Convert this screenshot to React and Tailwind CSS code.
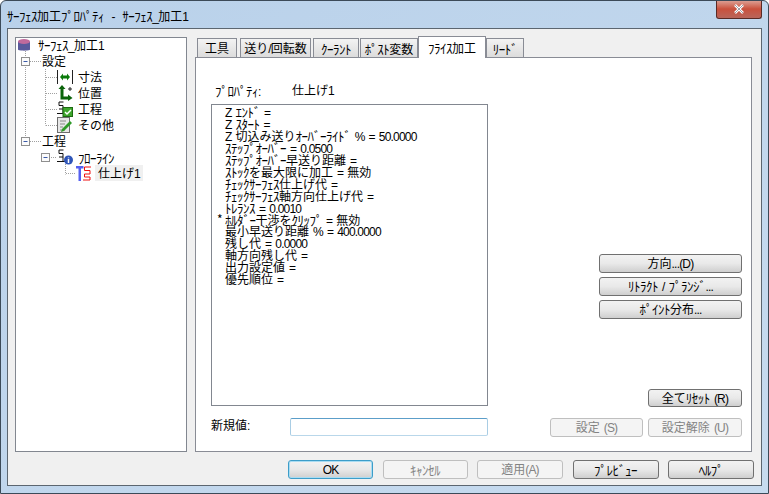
const T = ({ children }) => {
  const parts = String(children).match(/[\uFF61-\uFF9F]+|[\x20-\x7E]+|[^\x20-\x7E\uFF61-\uFF9F]+/g) || [];
  return parts.map((p, i) => {
    if (/^[\uFF61-\uFF9F]/.test(p)) return <span key={i} className="text-[13px] tracking-[-0.5px] leading-none">{p}</span>;
    if (/^[\x20-\x7E]/.test(p)) return <span key={i} className="[font-family:'Liberation_Sans',sans-serif] text-[12px] tracking-[-0.8px] leading-none whitespace-pre">{p}</span>;
    return <span key={i} className="text-[12px] leading-none">{p}</span>;
  });
};

const Btn = ({ w, children, disabled, def }) => (
  <div
    className={`${w} h-[18.5px] shrink-0 flex items-center justify-center rounded-[3px] border ${
      disabled
        ? 'border-[#bfbfbf] bg-[#f4f4f4] text-[#838383]'
        : def
        ? 'border-[#3c9dc9] bg-gradient-to-b from-[#f2f2f2] via-[#e8e8e8] to-[#cfcfcf] text-black shadow-[inset_0_0_0_1px_#a9dcf2]'
        : 'border-[#707070] bg-gradient-to-b from-[#f2f2f2] via-[#e9e9e9] to-[#cfcfcf] text-black'
    }`}
  >
    <span><T>{children}</T></span>
  </div>
);

const Tab = ({ w, children, active }) =>
  active ? (
    <div className={`${w} h-[22px] relative z-10 -mb-px border border-b-0 border-[#898c95] bg-white flex items-center justify-center`}>
      <span><T>{children}</T></span>
    </div>
  ) : (
    <div className={`${w} h-[19px] border border-b-0 border-[#898c95] bg-gradient-to-b from-[#f3f3f3] to-[#dcdcdc] flex items-center justify-center`}>
      <span><T>{children}</T></span>
    </div>
  );

const Row = ({ pl, icon, gap, children, hl }) => (
  <div className={`h-4 flex items-center ${pl}`}>
    {icon}
    <span className={`${gap} whitespace-nowrap ${hl ? 'bg-[#f0f0f0] h-4 flex items-center px-[3px]' : ''}`}>{hl ? <span><T>{children}</T></span> : <T>{children}</T>}</span>
  </div>
);

const Db = () => (
  <svg width="12" height="13" viewBox="0 0 12 13" className="shrink-0">
    <path d="M0 2.5v8C0 12 12 12 12 10.500v-8z" fill="#5a5a9c" />
    <ellipse cx="6" cy="2.500" rx="6" ry="2.500" fill="#c06a9c" />
  </svg>
);
const Dim = () => (
  <svg width="16" height="14" viewBox="0 0 16 14" className="shrink-0">
    <path d="M.5 0v14M15.500 0v14" stroke="#222" />
    <path d="M3 7l3-3.500v2h4v-2L13 7l-3 3.500v-2H6v2z" fill="#0a7a0a" />
  </svg>
);
const Pos = () => (
  <svg width="16" height="16" viewBox="0 0 16 16" className="shrink-0">
    <path d="M5 2v11h7" fill="none" stroke="#0b640b" strokeWidth="3" />
    <path d="M1.500 4L5 0l3.500 4zM11 9.500L15.500 13 11 16z" fill="#0b640b" />
    <path d="M11 4h4M13 2v4" stroke="#222" />
  </svg>
);
const Proc = ({ badge }) => (
  <svg width="16" height="16" viewBox="0 0 16 16" className="shrink-0">
    <path d="M6.500 1H2v3.500h4v3.500H2M0 12.500h9M6 8v4.500" fill="none" stroke="#111" strokeWidth="1" />
    {badge === 'check' ? (
      <g>
        <rect x="6" y="6.500" width="9.500" height="9" fill="#3da62c" stroke="#1d6a12" />
        <path d="M8 11l2 2 4-4" fill="none" stroke="#fff" strokeWidth="1.500" />
      </g>
    ) : (
      <g>
        <circle cx="11.500" cy="11" r="4.500" fill="#2f55b8" />
        <path d="M11.500 8.500v.8M11.500 10v4" stroke="#fff" strokeWidth="1.500" />
      </g>
    )}
  </svg>
);
const Note = () => (
  <svg width="15" height="16" viewBox="0 0 15 16" className="shrink-0">
    <rect x=".5" y=".5" width="12" height="15" fill="#e8e8e8" stroke="#6e6e6e" />
    <path d="M3 4h6M3 7h5M3 10h3M3 13h5" stroke="#8a8a8a" />
    <path d="M5 12l8-8 2 2-8 8-3 1z" fill="#2f9a28" />
  </svg>
);
const Tool = () => (
  <svg width="16" height="15" viewBox="0 0 16 15" className="shrink-0">
    <path d="M0 0h7.500v2.500H5V15H2.500V2.500H0z" fill="#5560f0" />
    <path d="M15 1h-6.500v3.500H14v3.500H8.500v3H14v3H7" fill="none" stroke="#f01010" strokeWidth="1" />
  </svg>
);

const lines = [
  ['', 'Z ｴﾝﾄﾞ ='],
  ['', 'Z ｽﾀｰﾄ ='],
  ['', 'Z 切込み送りｵｰﾊﾞｰﾗｲﾄﾞ % = 50.0000'],
  ['', 'ｽﾃｯﾌﾟｵｰﾊﾞｰ = 0.0500'],
  ['', 'ｽﾃｯﾌﾟｵｰﾊﾞｰ早送り距離 ='],
  ['', 'ｽﾄｯｸを最大限に加工 = 無効'],
  ['', 'ﾁｪｯｸｻｰﾌｪｽ仕上げ代 ='],
  ['', 'ﾁｪｯｸｻｰﾌｪｽ軸方向仕上げ代 ='],
  ['', 'ﾄﾚﾗﾝｽ = 0.0010'],
  ['*', 'ﾎﾙﾀﾞｰ干渉をｸﾘｯﾌﾟ = 無効'],
  ['', '最小早送り距離 % = 400.0000'],
  ['', '残し代 = 0.0000'],
  ['', '軸方向残し代 ='],
  ['', '出力設定値 ='],
  ['', '優先順位 ='],
];

const Connectors = () => (
  <svg width="172" height="160" className="absolute left-0 -top-px pointer-events-none" fill="none">
    <g stroke="#a0a0a0" strokeDasharray="1 1">
      <path d="M9.500 14v90M14 24.500h12M14 104.500h12M29.500 32v56.500M30 40.500h11M30 56.500h11M30 72.500h11M30 88.500h11M33 120.500h8M49.500 125v12.500M50 136.500h10" />
    </g>
    <g fill="#fbfbfb" stroke="#8f8f8f">
      <rect x="5.500" y="20.500" width="8" height="8" />
      <rect x="5.500" y="100.500" width="8" height="8" />
      <rect x="25.500" y="116.500" width="8" height="8" />
    </g>
    <path d="M7.500 24.500h4M7.500 104.500h4M27.500 120.500h4" stroke="#3b5aa8" />
  </svg>
);

export default function App() {
  return (
    <div className="w-[769px] h-[494px] overflow-hidden flex flex-col bg-gradient-to-br from-[#b9d1ea] to-[#c7dbef] border border-[#3c4a58] rounded-t-[6px] [font-family:'Noto_Sans_CJK_JP','Noto_Sans_CJK_SC',sans-serif] text-[12px] leading-[12px] [word-spacing:1.5px] text-black">
      <div className="h-[27px] shrink-0 flex items-start justify-between pl-[6px] pr-[6px]">
        <div className="mt-[8px] whitespace-nowrap [word-spacing:5px]"><T>ｻｰﾌｪｽ加工ﾌﾟﾛﾊﾟﾃｨ - ｻｰﾌｪｽ_加工1</T></div>
        <div className="w-[46px] h-[19px] -mt-px rounded-b-[3px] border border-t-0 border-[#5a2a25] bg-gradient-to-b from-[#dca59b] via-[#c9503c] to-[#b9655a] flex items-center justify-center">
          <svg width="12" height="10" viewBox="0 0 12 10">
            <path d="M2 1l8 8M10 1L2 9" stroke="#fff" strokeWidth="2.500" />
            <path d="M2 1l8 8M10 1L2 9" stroke="#5a5a6a" strokeWidth=".6" />
          </svg>
        </div>
      </div>
      <div className="ml-[6px] mr-[6px] h-[458px] border border-[#5c6670] bg-[#f0f0f0] flex flex-col pl-[7px] pr-[7px] pt-[8px]">
        <div className="flex gap-[8px] h-[415px] shrink-0 mr-[2px]">
          <div className="relative w-[172px] border border-[#828790] bg-white">
            <Connectors />
            <div className="relative flex flex-col -mt-px">
              <Row pl="pl-[2px]" icon={<Db />} gap="ml-[8px]">ｻｰﾌｪｽ_加工1</Row>
              <Row pl="pl-[26px]">設定</Row>
              <Row pl="pl-[41px]" icon={<Dim />} gap="ml-[5px]">寸法</Row>
              <Row pl="pl-[41px]" icon={<Pos />} gap="ml-[5px]">位置</Row>
              <Row pl="pl-[41px]" icon={<Proc badge="check" />} gap="ml-[5px]">工程</Row>
              <Row pl="pl-[41px]" icon={<Note />} gap="ml-[6px]">その他</Row>
              <Row pl="pl-[26px]">工程</Row>
              <Row pl="pl-[41px]" icon={<Proc />} gap="ml-[5px]">ﾌﾛｰﾗｲﾝ</Row>
              <Row pl="pl-[60px]" icon={<Tool />} gap="ml-[3px]" hl>仕上げ1</Row>
            </div>
          </div>
          <div className="flex-1 flex flex-col">
            <div className="flex items-end h-[20px] pl-[2px] gap-0 shrink-0">
              <Tab w="w-[40px] mr-[3px]">工具</Tab>
              <Tab w="w-[71px] mr-[2px]">送り/回転数</Tab>
              <Tab w="w-[46px] mr-[1px]">ｸｰﾗﾝﾄ</Tab>
              <Tab w="w-[58px]">ﾎﾟｽﾄ変数</Tab>
              <Tab w="w-[68px]" active>ﾌﾗｲｽ加工</Tab>
              <Tab w="w-[38px]">ﾘｰﾄﾞ</Tab>
            </div>
            <div className="flex-1 border border-[#898c95] bg-white flex pl-[15px] pr-[9px] pb-[14px]">
              <div className="w-[277px] shrink-0 flex flex-col">
                <div className="mt-[26px] h-[13px] flex items-center pl-[4px]">
                  <span className="w-[77px] whitespace-nowrap"><T>ﾌﾟﾛﾊﾟﾃｨ:</T></span>
                  <span className="whitespace-nowrap"><T>仕上げ1</T></span>
                </div>
                <div className="mt-[7px] h-[302px] border border-[#828790] bg-white pl-[5px]">
                  {lines.map(([m, t], i) => (
                    <div key={i} className="flex items-start h-[12px] whitespace-nowrap">
                      <span className="w-[8px] shrink-0">{m}</span>
                      <span><T>{t}</T></span>
                    </div>
                  ))}
                </div>
                <div className="mt-[12px] flex items-center">
                  <span className="w-[79px] whitespace-nowrap pb-[4px]"><T>新規値:</T></span>
                  <div className="w-[198px] h-[18px] rounded-[2px] border border-[#5c9ec9] border-b-[#b9d7ea] border-x-[#a9cde4] bg-white"></div>
                </div>
              </div>
              <div className="flex-1 flex flex-col items-end">
                <div className="mt-[196px] flex flex-col gap-[4.500px]">
                  <Btn w="w-[143px]">方向...(D)</Btn>
                  <Btn w="w-[143px]">ﾘﾄﾗｸﾄ / ﾌﾟﾗﾝｼﾞ...</Btn>
                  <Btn w="w-[143px]">ﾎﾟｲﾝﾄ分布...</Btn>
                </div>
                <div className="mt-[70px]">
                  <Btn w="w-[94px]">全てﾘｾｯﾄ (R)</Btn>
                </div>
                <div className="mt-[11px] flex gap-[5px]">
                  <Btn w="w-[93px]" disabled>設定 (S)</Btn>
                  <Btn w="w-[94px]" disabled>設定解除 (U)</Btn>
                </div>
              </div>
            </div>
          </div>
        </div>
        <div className="mt-[8px] flex justify-end gap-[9.500px]">
          <Btn w="w-[85px]" def>OK</Btn>
          <Btn w="w-[85px]" disabled>ｷｬﾝｾﾙ</Btn>
          <Btn w="w-[86px]" disabled>適用(A)</Btn>
          <Btn w="w-[86px]">ﾌﾟﾚﾋﾞｭｰ</Btn>
          <Btn w="w-[86px]">ﾍﾙﾌﾟ</Btn>
        </div>
      </div>
    </div>
  );
}
